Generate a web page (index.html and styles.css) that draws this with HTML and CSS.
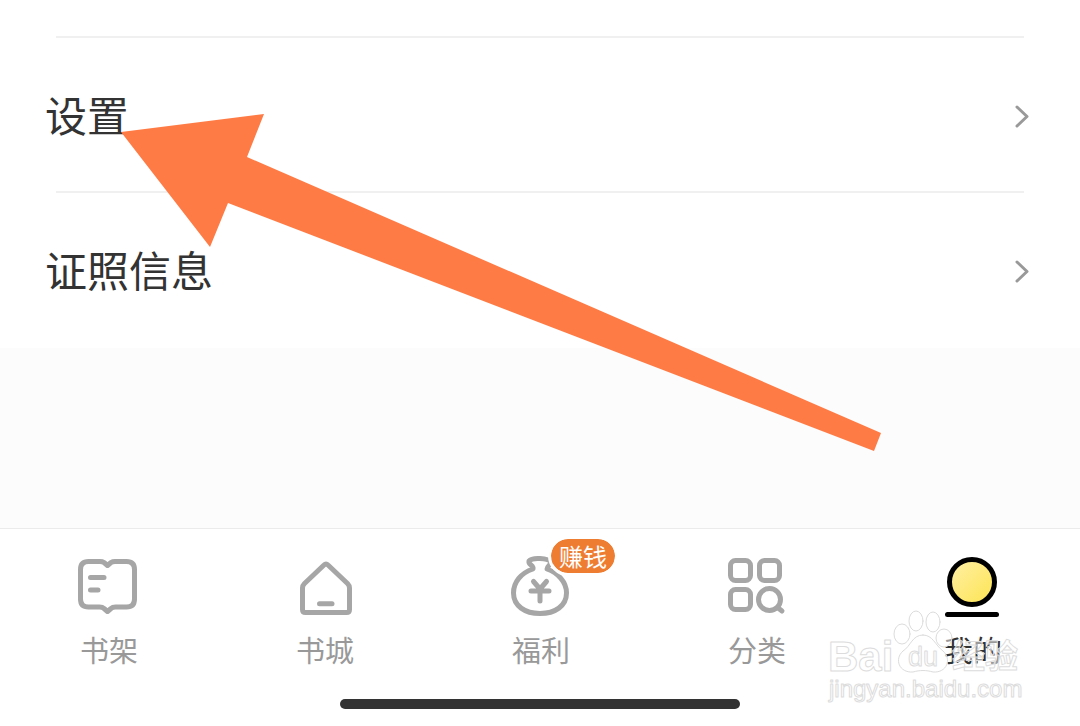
FILE: index.html
```html
<!DOCTYPE html>
<html lang="zh-CN">
<head>
  <meta charset="UTF-8" />
  <meta name="viewport" content="width=device-width, initial-scale=1.0"/>
  <title>我的</title>
  <link rel="stylesheet" href="styles.css">
</head>
<body>
  <main class="page">
    <div class="menu">
      <a class="menu-item" href="#settings">
        <span>设置</span>
        <svg class="chevron" viewBox="0 0 16 24"><path d="M3 3l10 9.5L3 22"/></svg>
      </a>
      <a class="menu-item" href="#license">
        <span>证照信息</span>
        <svg class="chevron" viewBox="0 0 16 24"><path d="M3 3l10 9.5L3 22"/></svg>
      </a>
    </div>

    <!-- 指向“设置”的箭头 -->
    <svg class="arrow" viewBox="0 0 760 338">
      <polygon points="0,18 143,0 126,43 760,319 753,337 107,89 89,133"/>
    </svg>
  </main>

  <footer class="bottom">
    <nav class="tabs">
      <a class="tab" href="#shelf">
        <svg class="icon" viewBox="0 0 60 60">
          <path d="M29.500 9.500L26 6.500Q24.500 5.500 22 5.500H10.500Q2.500 5.500 2.500 13.500V43Q2.500 51 10.500 51H21.500Q24.500 51 26 52.500L29.500 55.500L33 52.500Q34.500 51 37.500 51H48.500Q56.500 51 56.500 43V13.500Q56.500 5.500 48.500 5.500H37Q34.500 5.500 33 6.500Z"/>
          <path d="M12.500 21.500H26M12.500 34H20"/>
        </svg>
        <span class="label">书架</span>
      </a>
      <a class="tab" href="#store">
        <svg class="icon" viewBox="0 0 60 60">
          <path d="M30 9Q32 7 34 9L53.500 27.500Q55.500 29.500 55.500 32V53.500Q55.500 56.500 52.500 56.500H11.500Q8.500 56.500 8.500 53.500V32Q8.500 29.500 10.500 27.500Z"/>
          <path d="M25.500 47.800H38"/>
        </svg>
        <span class="label">书城</span>
      </a>
      <a class="tab" href="#welfare">
        <span class="icon-box">
          <svg class="icon" viewBox="0 0 60 60">
            <path d="M23 13C11 17 3.500 26 3.500 37C3.500 50 15 57.500 30 57.500S56.500 50 56.500 37C56.500 26 48 17 37 13C37 10 41 9 41 6C38 2 22 1 19 5C18 9 24 9 23 13Z"/>
            <path d="M23.500 25.500L30 33L36.500 25.500M21 35H39M30 34V45"/>
          </svg>
          <span class="badge">赚钱</span>
        </span>
        <span class="label">福利</span>
      </a>
      <a class="tab" href="#category">
        <svg class="icon" viewBox="0 0 60 60">
          <rect x="4.500" y="4.500" width="20" height="20" rx="5"/>
          <rect x="33.500" y="4.500" width="20" height="20" rx="5"/>
          <rect x="4.500" y="33.500" width="20" height="20" rx="5"/>
          <circle cx="43.500" cy="43.500" r="11"/>
          <path d="M51.500 51.500L56 55"/>
        </svg>
        <span class="label">分类</span>
      </a>
      <a class="tab active" href="#mine">
        <svg class="icon" viewBox="0 0 60 60">
          <defs>
            <linearGradient id="face" x1="0" y1="0" x2="1" y2="1">
              <stop offset="0" stop-color="#fff0a8"/>
              <stop offset="1" stop-color="#fde44f"/>
            </linearGradient>
          </defs>
          <circle cx="30" cy="26" r="22.500" fill="url(#face)"/>
          <path d="M5.500 58.500H54.500"/>
        </svg>
        <span class="label">我的</span>
      </a>
    </nav>
    <div class="home-bar"></div>

    <svg class="watermark" viewBox="0 0 210 110">
      <ellipse cx="82" cy="34" rx="8" ry="10"/>
      <ellipse cx="96" cy="21" rx="7" ry="10"/>
      <ellipse cx="113" cy="22" rx="7" ry="10"/>
      <ellipse cx="124" cy="38" rx="8" ry="9"/>
      <path d="M103 35C92 35 91 46 83 51C74 59 79 73 93 72C100 70 106 70 113 72C127 73 132 59 123 51C115 45 113 35 103 35Z"/>
      <text class="wm-logo" x="8" y="71">Bai</text>
      <text class="wm-du" x="88" y="66">du</text>
      <text class="wm-cn" x="132" y="68">经验</text>
      <text class="wm-url" x="9" y="97">jingyan.baidu.com</text>
    </svg>
  </footer>
</body>
</html>
```
FILE: styles.css
```css
* {
  box-sizing: border-box;
}

body {
  margin: 0;
  min-height: 100vh;
  display: flex;
  flex-direction: column;
  font-family: "Noto Sans CJK SC", "Noto Sans", sans-serif;
  background-color: #fcfcfc;
  color: #333;
}

a {
  color: inherit;
  text-decoration: none;
}

svg {
  display: block;
  overflow: visible;
  fill: none;
  stroke: currentColor;
  stroke-linecap: round;
  stroke-linejoin: round;
}

.page {
  position: relative;
  flex: 1;
}

.menu {
  padding: 36px 50px 2px 45px;
  background-color: #fff;
}

.menu-item {
  display: flex;
  align-items: center;
  justify-content: space-between;
  height: 155px;
  font-size: 42px;
  line-height: 60px;
  background: linear-gradient(#f0f0f0, #f0f0f0) 11px 0 / calc(100% - 17px) 2px no-repeat;
}

.chevron {
  width: 16px;
  height: 24px;
  margin-top: 4px;
  color: #999;
  stroke-width: 3;
}

.arrow {
  position: absolute;
  left: 121px;
  top: 114px;
  width: 760px;
  fill: #ff7b45;
  stroke: none;
  pointer-events: none;
}

.bottom {
  position: relative;
  padding-bottom: 17px;
  border-top: 1px solid #ebebeb;
  background-color: #fff;
}

.tabs {
  display: grid;
  grid-template-columns: repeat(5, 1fr);
  padding: 27px 0 30px;
}

.tab {
  display: flex;
  flex-direction: column;
  align-items: center;
  gap: 13px;
  color: #999;
}

.icon {
  width: 60px;
  height: 60px;
  color: #a6a6a6;
  stroke-width: 5;
}

.icon-box {
  position: relative;
}

.badge {
  position: absolute;
  left: 38px;
  top: -20px;
  padding: 0 8px;
  border: 3px solid #fff;
  border-radius: 20px;
  font-size: 24px;
  line-height: 34px;
  white-space: nowrap;
  color: #fff;
  background-color: #ef7d31;
  background-clip: padding-box;
}

.label {
  padding-left: 2px;
  font-size: 29px;
  line-height: 40px;
}

.active {
  color: #333;
}

.active .icon {
  color: #000;
}

.home-bar {
  width: 37%;
  height: 10px;
  margin: 0 auto;
  border-radius: 5px;
  background-color: #333;
}

.watermark {
  position: absolute;
  right: 50px;
  bottom: 16px;
  width: 210px;
  height: 110px;
  fill: rgba(255, 255, 255, 0.5);
  stroke: #dcdcdc;
  stroke-width: 1;
  pointer-events: none;
}

.watermark text {
  font-family: "Liberation Sans", "Noto Sans CJK SC", sans-serif;
}

.wm-logo {
  font-size: 42px;
  font-weight: bold;
}

.wm-du {
  font-size: 27px;
}

.wm-cn {
  font-size: 33px;
  font-weight: bold;
}

.wm-url {
  font-size: 24px;
}
```
